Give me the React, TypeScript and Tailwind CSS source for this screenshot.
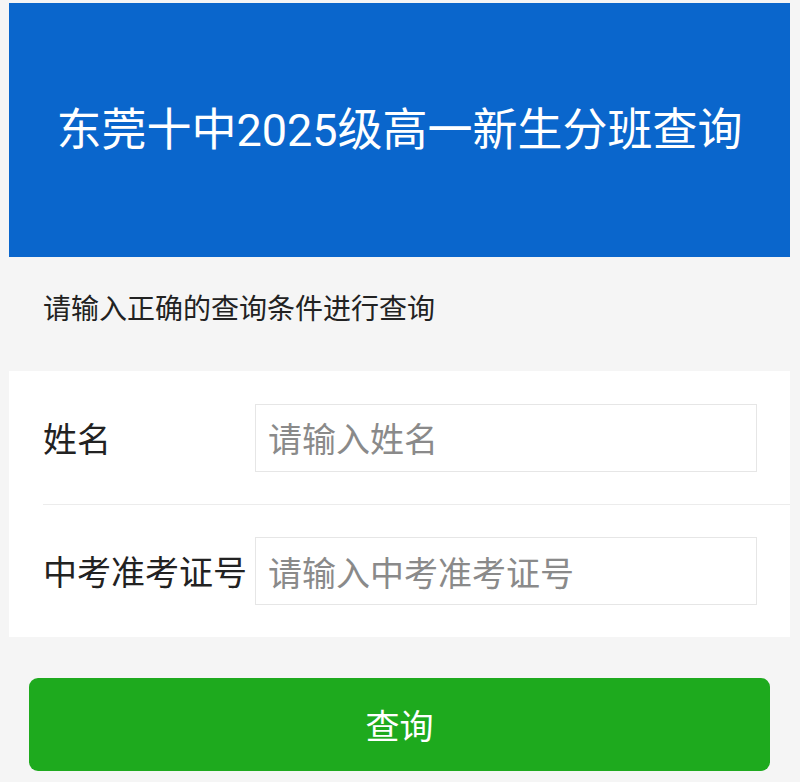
import React from "react";

const font = { fontFamily: '"Noto Sans CJK SC", "Noto Sans", sans-serif' };
const titleFont = { fontFamily: 'Roboto, "Noto Sans CJK SC", sans-serif' };

export default function App() {
  return (
    <div className="min-h-[782px] w-[800px] bg-[#f5f5f5] pt-[3px]" style={font}>
      <div className="ml-[9px] flex h-[254px] w-[781px] items-center justify-center bg-[#0a66cc]">
        <h1 className="text-[45px] font-normal leading-none text-white" style={titleFont}>东莞十中2025级高一新生分班查询</h1>
      </div>
      <div className="flex h-[114px] items-center pl-[43px] pb-[14px] text-[28px] leading-none text-[#222]">
        请输入正确的查询条件进行查询
      </div>
      <div className="ml-[9px] w-[781px] bg-white">
        <div className="ml-[34px] flex h-[134px] items-center border-b border-[#ececec] pr-[33px]">
          <div className="w-[212px] text-[34px] leading-none text-[#222]">姓名</div>
          <input
            className="h-[68px] flex-1 border border-[#e6e6e6] px-[12px] text-[34px] leading-none text-[#222] outline-none placeholder:text-[#8a8a8a]"
            placeholder="请输入姓名"
            style={font}
          />
        </div>
        <div className="ml-[34px] flex h-[132px] items-center pr-[33px]">
          <div className="w-[212px] text-[34px] leading-none text-[#222]">中考准考证号</div>
          <input
            className="h-[68px] flex-1 border border-[#e6e6e6] px-[12px] text-[34px] leading-none text-[#222] outline-none placeholder:text-[#8a8a8a]"
            placeholder="请输入中考准考证号"
            style={font}
          />
        </div>
      </div>
      <div className="px-[29px] pt-[41px]">
        <button
          className="flex h-[93px] w-[741px] items-center justify-center rounded-[9px] bg-[#1eaa1e] text-[34px] leading-none text-white"
          style={font}
        >
          查询
        </button>
      </div>
    </div>
  );
}
